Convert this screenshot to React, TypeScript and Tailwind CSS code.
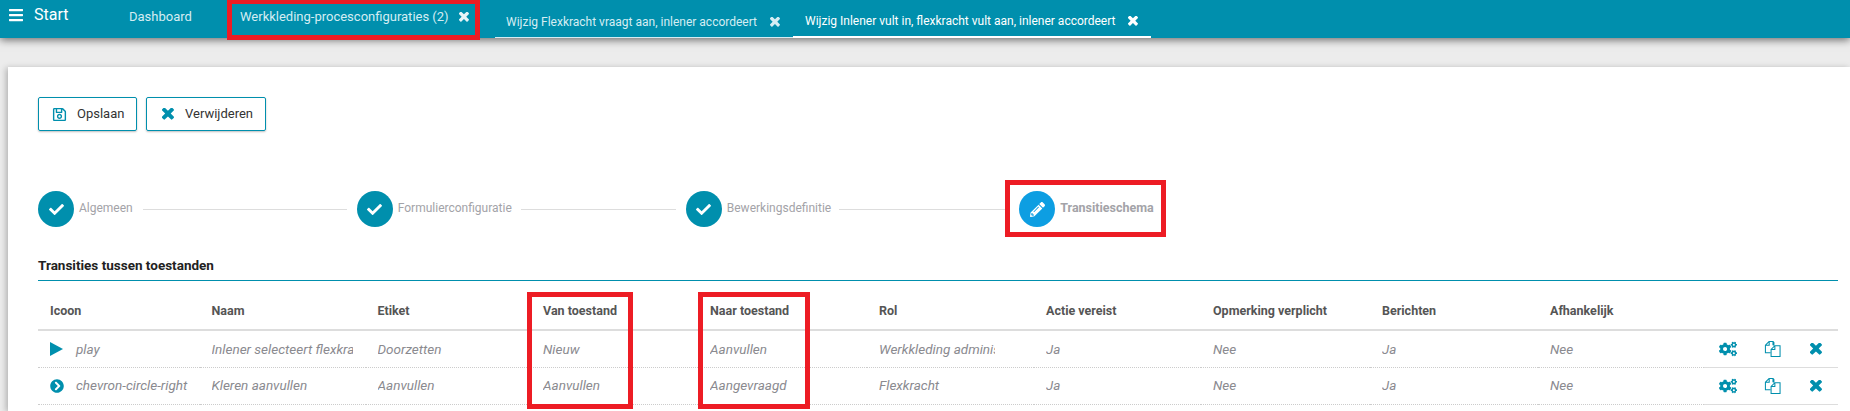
import React from "react";
import { FaBars, FaRegSave, FaCheck, FaPencilAlt, FaChevronCircleRight, FaCogs } from "react-icons/fa";

const X = ({ s, className }: { s: number; className?: string }) => (
  <svg viewBox="120 300 1180 1180" width={s} height={s} fill="currentColor" className={`shrink-0 ${className ?? ""}`}>
    <path d="M1298 1214q0 40-28 68l-136 136q-28 28-68 28t-68-28l-294-294-294 294q-28 28-68 28t-68-28l-136-136q-28-28-28-68t28-68l294-294-294-294q-28-28-28-68t28-68l136-136q28-28 68-28t68 28l294 294 294-294q28-28 68-28t68 28l136 136q28 28 28 68t-28 68l-294 294 294 294q28 28 28 68z" />
  </svg>
);

const PlayIcon = () => (
  <svg viewBox="0 0 13 14" width={13} height={14} fill="#008fad" className="block">
    <path d="M0 0 L13 7 L0 14 Z" />
  </svg>
);

const CopyIcon = () => (
  <svg viewBox="0 0 18 18" className="w-[17px] h-[18px] -ml-[2px]" fill="none" stroke="#008fad" strokeWidth="1.1">
    <path d="M5.5 1 H9.5 V5 M9.5 1 L10.5 2 V5.5 M5.5 1 L1.5 5 V13 H7 M5.5 1 V5 H1.5" />
    <path d="M11.5 5.5 H17 V17 H7.5 V9.5 Z M11.5 5.5 V9.5 H7.5" />
  </svg>
);

const Step = ({ label, active }: { label: string; active?: boolean }) => (
  <div className="flex items-center gap-[5px] shrink-0">
    <div className={`w-9 h-9 rounded-full flex items-center justify-center text-white ${active ? "bg-[#0d9ee2]" : "bg-[#008fad]"}`}>
      {active ? <FaPencilAlt size={15} /> : <FaCheck size={15} />}
    </div>
    <span className={`text-[#a3a3a8] -mt-[2px] ${active ? "font-bold text-[12.5px]" : "text-[12px]"}`}>{label}</span>
  </div>
);

const Line = ({ w }: { w: string }) => <div className={`h-px bg-[#dddddd] ${w}`} />;

const cols = ["w-[161.5px]", "w-[166px]", "w-[165.5px]", "w-[167px]", "w-[169px]", "w-[167px]", "w-[167px]", "w-[169px]", "w-[168px]", "w-[166px]", "w-[48px]", "w-[42px]", "w-[44px]"];
const heads = ["Icoon", "Naam", "Etiket", "Van toestand", "Naar toestand", "Rol", "Actie vereist", "Opmerking verplicht", "Berichten", "Afhankelijk", "", "", ""];

const rows = [
  { icon: <PlayIcon />, name: "play", naam: "Inlener selecteert flexkracht", etiket: "Doorzetten", van: "Nieuw", naar: "Aanvullen", rol: "Werkkleding administrateur" },
  { icon: <FaChevronCircleRight size={14} />, name: "chevron-circle-right", naam: "Kleren aanvullen", etiket: "Aanvullen", van: "Aanvullen", naar: "Aangevraagd", rol: "Flexkracht" },
];

const Td = ({ children, clip }: { children: React.ReactNode; clip?: string }) => (
  <td className="pl-3 border-b border-dotted border-[#cccccc] align-middle">
    <div className={`overflow-hidden whitespace-nowrap ${clip ?? ""}`}>{children}</div>
  </td>
);

const ActionTd = ({ children }: { children: React.ReactNode }) => (
  <td className="border-b border-[#dddddd] align-middle">
    <div className="flex justify-center text-[#008fad]">{children}</div>
  </td>
);

export default function App() {
  return (
    <div className="relative w-[1850px] h-[411px] overflow-hidden bg-[#ececec] font-['Roboto',sans-serif]">
      <header className="relative z-10 h-[38px] bg-[#008fad] shadow-[0_2px_8px_rgba(0,0,0,0.55)] flex items-start text-white">
        <div className="flex items-center h-[30px] pl-[8px] w-[129px] shrink-0">
          <FaBars size={16} />
          <span className="ml-[10px] text-[16px]">Start</span>
        </div>
        <span className="w-[98px] shrink-0 h-[33px] leading-[33px] text-[13px] text-[#d5edf3]">Dashboard</span>
        <div className="shrink-0 w-[253px] h-[41px] -mt-px border-[5px] border-[#ed1c24] flex items-start pl-[8px] text-[#d5edf3]">
          <span className="text-[13px] leading-[26px] whitespace-nowrap">Werkkleding-procesconfiguraties (2)</span>
          <X s={10} className="ml-[10px] mt-[8px] text-[#e6f4f7]" />
        </div>
        <div className="ml-[15px] shrink-0 w-[298px] h-[38px] border-b border-[#d5edf3] flex items-center pl-[11px] text-[#d5edf3] pt-[6px]">
          <span className="text-[12px] whitespace-nowrap">Wijzig Flexkracht vraagt aan, inlener accordeert</span>
          <X s={10} className="ml-[13px]" />
        </div>
        <div className="shrink-0 w-[358px] h-[38px] border-b-2 border-white flex items-center pl-[12px] pt-[6px]">
          <span className="text-[12px] whitespace-nowrap">Wijzig Inlener vult in, flexkracht vult aan, inlener accordeert</span>
          <X s={10} className="ml-[12px]" />
        </div>
      </header>

      <main className="relative ml-[8px] mt-[29px] h-[344px] bg-white pl-[30px] pr-[12px] pt-[30px] shadow-[-2px_1px_6px_rgba(0,0,0,0.25)]">
        <div className="flex gap-[9px]">
          <button className="w-[99px] h-[34px] border border-[#008fad] rounded-[2px] shadow-[0_1px_2px_rgba(0,0,0,0.25)] flex items-center pl-[13px] gap-[10px] text-[13px] text-[#333333]">
            <FaRegSave size={15} className="text-[#008fad]" />
            Opslaan
          </button>
          <button className="w-[120px] h-[34px] border border-[#008fad] rounded-[2px] shadow-[0_1px_2px_rgba(0,0,0,0.25)] flex items-center pl-[15px] gap-[11px] text-[13px] text-[#333333]">
            <X s={12} className="text-[#008fad]" />
            Verwijderen
          </button>
        </div>

        <div className="flex items-center mt-[60px] h-[36px]">
          <Step label="Algemeen" />
          <div className="w-[10px]" /><Line w="w-[204px]" /><div className="w-[10px]" />
          <Step label="Formulierconfiguratie" />
          <div className="w-[9px]" /><Line w="w-[155px]" /><div className="w-[10px]" />
          <Step label="Bewerkingsdefinitie" />
          <div className="w-[8px]" /><Line w="w-[166px]" />
          <div className="relative ml-[14px]">
            <Step label="Transitieschema" active />
            <div className="absolute -left-[14px] -top-[11px] w-[161px] h-[57px] border-[5px] border-[#ed1c24]" />
          </div>
        </div>

        <h2 className="mt-[27px] h-[26px] text-[13.5px] font-bold text-[#222222] leading-[22px]">Transities tussen toestanden</h2>
        <div className="h-px bg-[#008fad]" />

        <table className="table-fixed w-[1800px] border-collapse text-[13.5px]">
          <colgroup>
            {cols.map((c, i) => <col key={i} className={c} />)}
          </colgroup>
          <thead>
            <tr className="h-[49px]">
              {heads.map((h, i) => (
                <th key={i} className="pl-3 pt-[13px] text-left font-bold text-[12.5px] text-[#555555] border-b-2 border-[#dddddd] align-middle">{h}</th>
              ))}
            </tr>
          </thead>
          <tbody className="italic text-[#8a8a8f]">
            {rows.map((r) => (
              <tr key={r.name} className="h-[37px]">
                <td className="pl-3 border-b border-dotted border-[#cccccc] align-middle">
                  <div className="flex items-center whitespace-nowrap">
                    <span className="w-[26px] text-[#008fad] shrink-0 not-italic">{r.icon}</span>
                    {r.name}
                  </div>
                </td>
                <Td clip="w-[141px]">{r.naam}</Td>
                <Td>{r.etiket}</Td>
                <Td>{r.van}</Td>
                <Td>{r.naar}</Td>
                <Td clip="w-[116px]">{r.rol}</Td>
                <Td>Ja</Td>
                <Td>Nee</Td>
                <Td>Ja</Td>
                <Td>Nee</Td>
                <ActionTd><FaCogs size={18} /></ActionTd>
                <ActionTd><CopyIcon /></ActionTd>
                <ActionTd><X s={12} /></ActionTd>
              </tr>
            ))}
          </tbody>
        </table>

        <div className="absolute left-[519px] top-[225px] w-[106px] h-[117px] border-[5px] border-[#ed1c24]" />
        <div className="absolute left-[690px] top-[225px] w-[112px] h-[117px] border-[5px] border-[#ed1c24]" />
      </main>
    </div>
  );
}
